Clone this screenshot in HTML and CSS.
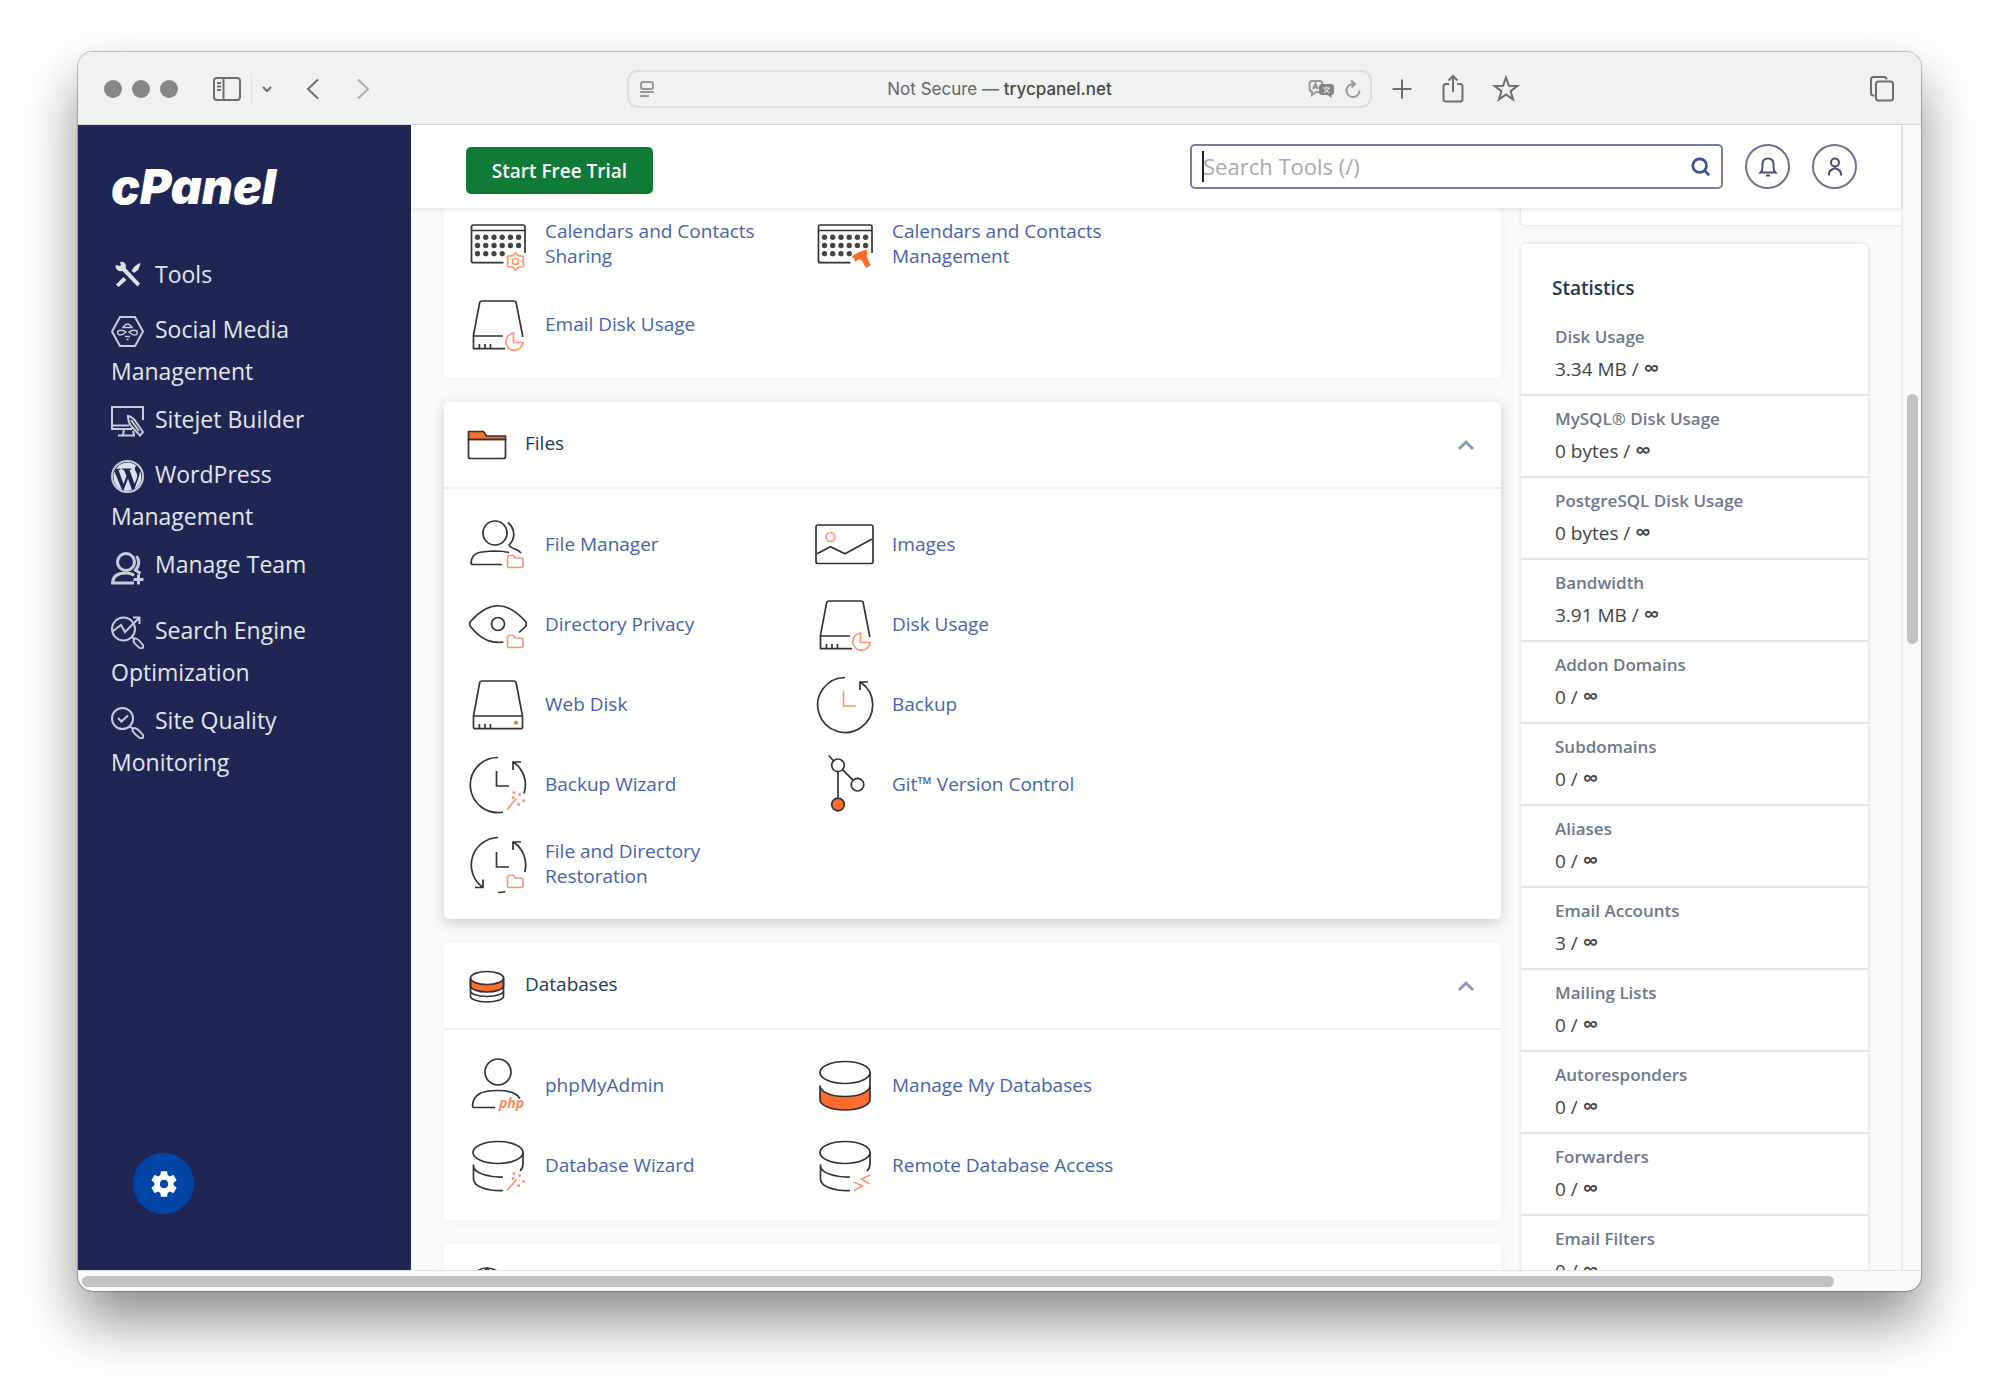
FILE: index.html
```html
<!DOCTYPE html>
<html lang="en">
<head>
    <meta charset="UTF-8">
    <meta name="viewport" content="width=device-width, initial-scale=1.0">
    <title>cPanel - Tools</title>
    <link rel="stylesheet" href="styles.css">
</head>
<body>
    <!-- icon sprite -->
    <svg class="sprite" aria-hidden="true">
        <symbol id="s-folder" viewBox="0 0 60 60">
            <path class="accent" d="M40.5 43q0-1.500 1.500-1.500h4.500l2 2.500h6q1.500 0 1.500 1.500v6.500q0 1.500-1.500 1.500h-12.500q-1.500 0-1.500-1.500z"/>
        </symbol>
        <symbol id="s-wand" viewBox="0 0 60 60">
            <path class="accent" d="M40 55.500l9.500-11"/>
            <path class="accent" stroke-linecap="round" stroke-width="3" d="M47 38.500h.1M52.500 40.500h.1M56.500 46.500h.1M46 43.500h.1M51.500 50.500h.1"/>
        </symbol>
        <symbol id="s-pie" viewBox="0 0 60 60">
            <path class="accent" d="M46.500 39a8.700 8.700 0 1 0 9.700 9.500h-8.700q-1 0-1-1z"/>
        </symbol>
        <symbol id="i-calendar" viewBox="0 0 60 60">
            <path d="M36.500 48.700H6.500q-2 0-2-2V13q0-2 2-2h49.500q2 0 2 2v26M4.500 16.500h53.500"/>
            <g class="dots">
                <circle cx="10.500" cy="23.300" r="2.700"/><circle cx="18.700" cy="23.300" r="2.700"/><circle cx="27" cy="23.300" r="2.700"/><circle cx="35.200" cy="23.300" r="2.700"/><circle cx="43.400" cy="23.300" r="2.700"/><circle cx="51.600" cy="23.300" r="2.700"/>
                <circle cx="10.500" cy="31.500" r="2.700"/><circle cx="18.700" cy="31.500" r="2.700"/><circle cx="27" cy="31.500" r="2.700"/><circle cx="35.200" cy="31.500" r="2.700"/><circle cx="43.400" cy="31.500" r="2.700"/><circle cx="51.600" cy="31.500" r="2.700"/>
                <circle cx="10.500" cy="39.700" r="2.700"/><circle cx="18.700" cy="39.700" r="2.700"/><circle cx="27" cy="39.700" r="2.700"/><circle cx="35.200" cy="39.700" r="2.700"/>
            </g>
        </symbol>
        <symbol id="i-cal-share" viewBox="0 0 60 60">
            <use href="#i-calendar"/>
            <path class="accent" d="M48.500 38.800l2.600 2.700 4.800.8q1 .5.800 1.500l-.8 3.600.8 3.600q.2 1-.8 1.500l-4.800.8-2.600 2.700-2.600-2.700-4.800-.8q-1-.5-.8-1.500l.8-3.600-.8-3.600q-.2-1 .8-1.500l4.800-.8z"/>
            <circle class="accent" cx="48.500" cy="47.500" r="3"/>
        </symbol>
        <symbol id="i-cal-manage" viewBox="0 0 60 60">
            <use href="#i-calendar"/>
            <path class="solid" d="M38 42l7-4 7.500-2.500 1.500 3-1.500 3.500 4 9.500-4.500 2.500-4.500-8-3.500-.500-2.500 2.500z"/>
        </symbol>
        <symbol id="i-disk-usage" viewBox="0 0 60 60">
            <path d="M55.500 43v-2L49.200 9q-.4-2-2.400-2H15q-2 0-2.400 2L6.500 41v13.700H38M6.500 42H36M12.400 50v4.700M18 50v4.700M23.500 50v4.700"/>
            <use href="#s-pie"/>
        </symbol>
        <symbol id="i-webdisk" viewBox="0 0 60 60">
            <path d="M6.500 42L12.600 9q.4-2 2.400-2h31.800q2 0 2.400 2l6.300 33v11q0 1.700-1.700 1.700H8.200q-1.700 0-1.700-1.700zH55.500M12.400 50v4.700M18 50v4.700M23.500 50v4.700"/>
            <circle class="dot-accent" cx="49" cy="48.700" r="2"/>
        </symbol>
        <symbol id="i-file-manager" viewBox="0 0 60 60">
            <circle cx="28" cy="19" r="12"/>
            <path d="M41 8.500c7 6 8 16 1 22.500q1 2.500 6 4 4 1.500 6 4M35 50.500H6q-2 0-2-2C5 38 13 37.500 28 37q8 0 14 1.500"/>
            <use href="#s-folder"/>
        </symbol>
        <symbol id="i-images" viewBox="0 0 60 60">
            <rect x="2" y="11" width="57" height="38.500" rx="2"/>
            <path d="M3 39.700l13.500-7L31 39.700 58 25"/>
            <circle class="accent" cx="16.500" cy="23" r="4.500"/>
        </symbol>
        <symbol id="i-privacy" viewBox="0 0 60 60">
            <path d="M36.500 48Q18 51 3.500 32.500q-1.800-2.500 0-5Q31-4 58.500 27.500q1.800 2.500 0 5L52 38.500"/>
            <circle cx="31" cy="30" r="6.500"/>
            <use href="#s-folder"/>
        </symbol>
        <symbol id="i-backup" viewBox="0 0 60 60">
            <path d="M31 3.500A27.500 27.500 0 1 0 47 8.500M54 8h-8v8"/>
            <path class="accent" d="M29.500 17v15H42"/>
        </symbol>
        <symbol id="i-backup-wizard" viewBox="0 0 60 60">
            <path d="M31 3.500A27.500 27.500 0 1 0 36 58M57 39.500A27.500 27.500 0 0 0 47 8.500M54 8h-8v8M29.500 17v15H42"/>
            <use href="#s-wand"/>
        </symbol>
        <symbol id="i-restore" viewBox="0 0 60 60">
            <path d="M31 3.500A27.500 27.500 0 0 0 16 53.500M8 53.500h8v-8M31 58.500q4 0 7.500-1M57.800 38A27.500 27.500 0 0 0 47 8.500M54 8h-8v8M29.500 18v15H42"/>
            <use href="#s-folder"/>
        </symbol>
        <symbol id="i-git" viewBox="0 0 60 60">
            <path d="M14.700 1.500l5 5.500M24 17.500v26M28.500 15.700l10.500 10.500"/>
            <circle cx="24" cy="11.300" r="6.300"/><circle cx="43.500" cy="30.700" r="6.300"/><circle class="filled" cx="24" cy="50.500" r="6.300"/>
        </symbol>
        <symbol id="i-php" viewBox="0 0 60 60">
            <circle cx="31" cy="17" r="13"/>
            <path d="M28 52.500H7q-1.500 0-1.500-1.500C6 39 15 35.500 31 35.500q17 0 22 8"/>
            <text class="php" x="32" y="53">php</text>
        </symbol>
        <symbol id="i-db" viewBox="0 0 60 60">
            <path class="filled" d="M6 30.500v14C6 50 16 55 31 55s25-5 25-10.500v-14C56 36.500 46 41.500 31 41.500S6 36.500 6 30.500z"/>
            <path d="M56 17.500v15"/>
            <ellipse cx="31" cy="17.500" rx="25" ry="11"/>
        </symbol>
        <symbol id="s-dbcut" viewBox="0 0 60 60">
            <ellipse cx="31" cy="17.500" rx="25" ry="11"/>
            <path d="M56 17.500V29q0 4-3 7M6.500 29.500V44c0 8 15 12 29.500 11.500M6.500 31c0 7 15 11.500 29.500 11"/>
        </symbol>
        <symbol id="i-db-wizard" viewBox="0 0 60 60"><use href="#s-dbcut"/><use href="#s-wand"/></symbol>
        <symbol id="i-db-remote" viewBox="0 0 60 60">
            <use href="#s-dbcut"/>
            <path class="accent" d="M39.500 47l9 4-9 4.500M56.500 40l-9 4 8 5"/>
        </symbol>
        <symbol id="chevron-up" viewBox="0 0 18 12"><path d="M2 10l7-7 7 7"/></symbol>
    </svg>

    <div class="window">
        <div class="toolbar">
            <div class="toolbar-side">
                <div class="lights"><span></span><span></span><span></span></div>
                <button class="tb-btn tb-sidebar" aria-label="Show sidebar">
                    <svg width="30" height="26" viewBox="0 0 30 26"><rect x="2" y="2" width="26" height="22" rx="3"/><path d="M11.500 2v22M5 7h4M5 10.500h4M5 14h4" /></svg>
                </button>
                <button class="tb-btn tb-more" aria-label="Tab groups">
                    <svg width="12" height="10" viewBox="0 0 12 10"><path d="M2 3l4 4 4-4"/></svg>
                </button>
                <button class="tb-btn tb-nav" aria-label="Back">
                    <svg width="18" height="24" viewBox="0 0 18 24"><path d="M14 2.500L4 12l10 9.500"/></svg>
                </button>
                <button class="tb-btn tb-nav dim" aria-label="Forward">
                    <svg width="18" height="24" viewBox="0 0 18 24"><path d="M4 2.500L14 12 4 21.500"/></svg>
                </button>
            </div>
            <div class="address">
                <svg width="16" height="18" viewBox="0 0 16 18"><rect x="2" y="2" width="12" height="7" rx="2"/><path d="M1 12h14M1 16h9"/></svg>
                <p>Not Secure — <b>trycpanel.net</b></p>
                <svg width="28" height="20" viewBox="0 0 28 20"><path d="M12 14l-1-1H8l-4 3v-3.500Q1.500 12 1.500 10V5q0-3 3-3h7q3 0 3 3M5 10l2.500-5.500L10 10M6 8.500h3"/><path class="fill" d="M14 5h9q3 0 3 3v5q0 3-2.500 3v3l-4-3H14q-3 0-3-3V8q0-3 3-3z"/><path class="cut" d="M15 9h7M18.500 7.500V9M16 13.500q4-1 5-4.500M16.500 10q1.500 3 5 3.500"/></svg>
                <svg width="18" height="20" viewBox="0 0 18 20"><path d="M9 5a6.500 6.500 0 1 0 6.500 6.500M7 1.500L11 5 7.500 8.500"/></svg>
            </div>
            <div class="toolbar-side">
                <button class="tb-btn tb-plus" aria-label="New tab"><svg width="22" height="22" viewBox="0 0 22 22"><path d="M11 1.500v19M1.500 11h19"/></svg></button>
                <button class="tb-btn tb-share" aria-label="Share"><svg width="24" height="30" viewBox="0 0 24 30"><path d="M8 10H5q-2.500 0-2.500 2.500V25q0 2.500 2.500 2.500h14q2.500 0 2.500-2.500V12.500Q21.500 10 19 10h-3M12 18V2M7.500 6.500L12 2l4.500 4.500"/></svg></button>
                <button class="tb-btn tb-star" aria-label="Bookmark"><svg width="28" height="28" viewBox="0 0 28 28"><path d="M14 2.500l2.900 8.300 8.600.1-6.900 5.200 2.500 8.400-7.100-5-7.100 5 2.500-8.400-6.900-5.200 8.600-.1z"/></svg></button>
                <button class="tb-btn tb-tabs" aria-label="Tab overview"><svg width="26" height="28" viewBox="0 0 26 28"><path d="M5.500 20.500H4.500Q2 20.500 2 18V4.500Q2 2 4.500 2H15q2.500 0 2.500 2.500"/><rect x="7" y="6.500" width="17" height="19" rx="2.500"/></svg></button>
            </div>
        </div>

        <div class="viewport">
            <nav class="sidebar">
                <a class="logo" href="#">cPanel</a>
                <ul>
                    <li class="single"><a href="#"><svg viewBox="0 0 33 33"><path class="f" d="M5 5l4 1 1-1-1-3q5-1 6 4l-.500 2L29 23.500 26.500 26.500 11.500 11Q6 12 4.500 7zM28.500 3l1 1-2.500 6-4 3-2.500-2.500 3-4zM12.500 17l3 3-8 7-2.500-2.500z"/></svg>Tools</a></li>
                    <li><a href="#"><svg viewBox="0 0 33 33"><path d="M9 2h15l8 14.500L24 31H9L1 16.500z"/><path class="thin" d="M12 12.500q4.500-7 9 0zM15 17q-4-3-8-1-1 4 2 4t6-3zM18 17q4-3 8-1 1 4-2 4t-6-3zM14 21.500h5M15.500 24.500h2"/></svg>Social Media Management</a></li>
                    <li class="single"><a href="#"><svg viewBox="0 0 33 33"><path d="M32 15V2H1v22h20M1 20.500h17M13 24l-1 6M22 26l1 4M7 30.500h17"/><path d="M17 11q5 1 8 6l7 10-3 3.500-8.500-9Q17 17 17 11zM20 15l8 11"/></svg>Sitejet Builder</a></li>
                    <li><a href="#"><svg viewBox="0 0 33 33"><circle cx="16.500" cy="16.500" r="15.500"/><path class="f" d="M3.500 11.500L11 30Q2.500 26 2.500 16.500q0-3 1-5zM5 9q4-6.500 11.500-6.500 5.500 0 9 3.500-2.500 1-1.500 4l2 4q.5 2.500-.5 5L23.500 24 18.500 10l2-.5v-1H11v1l2 .5 2.500 6-3 8L7.500 10l2-.5V8.500zM17 18.500l4 11.500q-4 1.500-8.500.3zM29 10.500q4.500 12.500-5.500 18.500l4.500-13q1-3 1-5.500z"/></svg>WordPress Management</a></li>
                    <li class="team"><a href="#"><svg viewBox="0 0 33 33"><g class="w"><circle cx="15" cy="10" r="8.500"/><path d="M25.500 4q5 7-1 14l5 3.500M23 31H1.500Q2 21 15 21q5 0 8 2.500M27.500 22.500v10M22.500 27.500h10"/></g></svg>Manage Team</a></li>
                    <li><a href="#"><svg viewBox="0 0 33 33"><circle cx="12.500" cy="13" r="11.500"/><path d="M1.500 15.500L10 9l4 7L28 2M22 1.500h6.500V8M21 21l2.500 2.500M24 22.500q2-1 8 6.500 1 3.500-2.500 3.500-6-4.500-7-7 0-2.500 1.500-3z"/></svg>Search Engine Optimization</a></li>
                    <li><a href="#"><svg viewBox="0 0 33 33"><circle cx="11.500" cy="12.500" r="10.500"/><path d="M7 12l3.500 3.500L17 9.500M19 20.500l3 2.500M23 22q3-.500 9 7 1 3.500-2.500 3.500-6-4.500-8-7.500 0-2.500 1.500-3z"/></svg>Site Quality Monitoring</a></li>
                </ul>
                <button class="fab" aria-label="Settings">
                    <svg width="32" height="32" viewBox="0 0 24 24"><path d="M19.140 12.940c.04-.3.060-.61.060-.94 0-.32-.020-.64-.070-.94l2.030-1.580a.49.49 0 0 0 .12-.61l-1.920-3.320a.49.49 0 0 0-.59-.22l-2.390.96a7 7 0 0 0-1.620-.94l-.36-2.540a.48.48 0 0 0-.48-.41h-3.840a.47.47 0 0 0-.47.41l-.36 2.540c-.59.240-1.130.570-1.620.940l-2.390-.96a.48.48 0 0 0-.59.220L2.740 8.870a.47.47 0 0 0 .12.610l2.030 1.580a6 6 0 0 0 0 1.880l-2.030 1.580a.49.49 0 0 0-.12.610l1.920 3.320c.12.220.370.290.590.220l2.390-.96c.5.380 1.030.700 1.620.940l.36 2.540c.05.240.240.410.480.410h3.840c.24 0 .44-.17.470-.41l.36-2.540a7 7 0 0 0 1.620-.94l2.390.96c.22.080.470 0 .59-.22l1.920-3.320a.47.47 0 0 0-.12-.61zM12 15.200a3.200 3.200 0 1 1 0-6.400 3.200 3.200 0 0 1 0 6.400z"/></svg>
                </button>
            </nav>

            <div class="page">
                <header class="topbar">
                    <button class="trial">Start Free Trial</button>
                    <div class="search">
                        <input id="search" type="text" placeholder="Search Tools (/)" aria-label="Search Tools">
                        <span class="caret"></span>
                        <button aria-label="Search"><svg width="20" height="20" viewBox="0 0 22 22"><circle cx="9.500" cy="9.500" r="7.500"/><path d="M15 15l5 5"/></svg></button>
                    </div>
                    <button class="round" aria-label="Notifications"><svg width="20" height="22" viewBox="0 0 20 22"><path d="M2.500 16.500h15q-2-2-2-5V8q0-5.500-5.500-5.500T4.500 8v3.500q0 3-2 5zM8 19.500h4"/></svg></button>
                    <button class="round" aria-label="User"><svg width="20" height="22" viewBox="0 0 20 22"><circle cx="10" cy="6.500" r="4"/><path d="M4 19.500V18q0-3 3-4.500l3-1.500 3 1.500q3 1.500 3 4.500v1.500"/></svg></button>
                </header>

                <div class="content">
                    <main>
                        <section class="card cut-top">
                            <div class="tools">
                                <a href="#"><svg><use href="#i-cal-share"/></svg><span>Calendars and Contacts Sharing</span></a>
                                <a href="#"><svg><use href="#i-cal-manage"/></svg><span>Calendars and Contacts Management</span></a>
                                <a href="#"><svg><use href="#i-disk-usage"/></svg><span>Email Disk Usage</span></a>
                            </div>
                        </section>

                        <section class="card active">
                            <div class="card-head">
                                <svg class="group-icon" viewBox="0 0 40 40"><path class="filled" d="M1.500 13V6.500h15l3 4.500h19v3.500h-37z"/><path d="M1.500 14.500v17q0 2 2 2h33q2 0 2-2v-17z"/></svg>
                                <h2>Files</h2>
                                <button class="toggle" aria-label="Collapse Files"><svg width="18" height="12"><use href="#chevron-up"/></svg></button>
                            </div>
                            <div class="tools">
                                <a href="#"><svg><use href="#i-file-manager"/></svg><span>File Manager</span></a>
                                <a href="#"><svg><use href="#i-images"/></svg><span>Images</span></a>
                                <a href="#"><svg><use href="#i-privacy"/></svg><span>Directory Privacy</span></a>
                                <a href="#"><svg><use href="#i-disk-usage"/></svg><span>Disk Usage</span></a>
                                <a href="#"><svg><use href="#i-webdisk"/></svg><span>Web Disk</span></a>
                                <a href="#"><svg><use href="#i-backup"/></svg><span>Backup</span></a>
                                <a href="#"><svg><use href="#i-backup-wizard"/></svg><span>Backup Wizard</span></a>
                                <a href="#"><svg><use href="#i-git"/></svg><span>Git™ Version Control</span></a>
                                <a href="#"><svg><use href="#i-restore"/></svg><span>File and Directory Restoration</span></a>
                            </div>
                        </section>

                        <section class="card">
                            <div class="card-head">
                                <svg class="group-icon" viewBox="0 0 40 40"><path class="filled" d="M3.500 13v7c0 3 7 6 16.500 6s16.500-3 16.500-6v-7z"/><ellipse class="white" cx="20" cy="12" rx="16.500" ry="6.500"/><path d="M3.500 12v18c0 3.500 7 6 16.500 6s16.500-2.500 16.500-6V12M3.500 24.500c0 3.500 7 6 16.500 6s16.500-2.500 16.500-6"/></svg>
                                <h2>Databases</h2>
                                <button class="toggle" aria-label="Collapse Databases"><svg width="18" height="12"><use href="#chevron-up"/></svg></button>
                            </div>
                            <div class="tools">
                                <a href="#"><svg><use href="#i-php"/></svg><span>phpMyAdmin</span></a>
                                <a href="#"><svg><use href="#i-db"/></svg><span>Manage My Databases</span></a>
                                <a href="#"><svg><use href="#i-db-wizard"/></svg><span>Database Wizard</span></a>
                                <a href="#"><svg><use href="#i-db-remote"/></svg><span>Remote Database Access</span></a>
                            </div>
                        </section>

                        <section class="card">
                            <div class="card-head">
                                <svg class="group-icon" viewBox="0 0 40 40"><circle cx="20" cy="19" r="18"/><path d="M2 19h36M20 1q-16 18 0 36 16-18 0-36z"/></svg>
                            </div>
                        </section>
                    </main>

                    <aside>
                        <div class="panel-end"></div>
                        <section class="stats">
                            <h2>Statistics</h2>
                            <dl>
                                <div><dt>Disk Usage</dt><dd>3.34 MB / <b>∞</b></dd></div>
                                <div><dt>MySQL® Disk Usage</dt><dd>0 bytes / <b>∞</b></dd></div>
                                <div><dt>PostgreSQL Disk Usage</dt><dd>0 bytes / <b>∞</b></dd></div>
                                <div><dt>Bandwidth</dt><dd>3.91 MB / <b>∞</b></dd></div>
                                <div><dt>Addon Domains</dt><dd>0 / <b>∞</b></dd></div>
                                <div><dt>Subdomains</dt><dd>0 / <b>∞</b></dd></div>
                                <div><dt>Aliases</dt><dd>0 / <b>∞</b></dd></div>
                                <div><dt>Email Accounts</dt><dd>3 / <b>∞</b></dd></div>
                                <div><dt>Mailing Lists</dt><dd>0 / <b>∞</b></dd></div>
                                <div><dt>Autoresponders</dt><dd>0 / <b>∞</b></dd></div>
                                <div><dt>Forwarders</dt><dd>0 / <b>∞</b></dd></div>
                                <div><dt>Email Filters</dt><dd>0 / <b>∞</b></dd></div>
                            </dl>
                        </section>
                    </aside>
                </div>
            </div>

            <div class="scroll-y"><span></span></div>
        </div>
        <div class="scroll-x"><span></span></div>
    </div>
</body>
</html>
```
FILE: styles.css
```css
:root {
    --navy: #202653;
    --link: #4763b0;
    --orange: #ff6c2c;
    --accent: #ff9470;
    --line: #333;
    --heading: #1f3a58;
    --page-bg: #fafafa;
    --thumb: #c2c2c2;
}

* {
    box-sizing: border-box;
}

body {
    display: flex;
    height: 100vh;
    margin: 0;
    padding: 52px 78px 103px;
    overflow: hidden;
    background: #fff;
    font-family: "Open Sans", sans-serif;
    font-size: 19px;
}

button {
    padding: 0;
    border: none;
    background: none;
    font-family: inherit;
    cursor: pointer;
}

a {
    text-decoration: none;
}

h2, p, ul, dl, dd {
    margin: 0;
    padding: 0;
}

svg {
    display: block;
    flex: none;
    fill: none;
    stroke: var(--line);
    stroke-width: 2;
}

.sprite {
    display: none;
}

.accent {
    stroke: var(--accent);
}

.solid, .dot-accent {
    fill: var(--orange);
    stroke: none;
}

.filled {
    fill: var(--orange);
}

.white {
    fill: #fff;
}

.dots {
    fill: #444;
    stroke: none;
}

.php {
    fill: #ff8a5c;
    stroke: none;
    font: italic 700 14px "Open Sans", sans-serif;
}

/* browser window */
.window {
    flex: 1;
    min-width: 0;
    display: flex;
    flex-direction: column;
    overflow: hidden;
    border-radius: 15px;
    background: var(--page-bg);
    box-shadow: 0 0 1px 1px rgba(0, 0, 0, 0.25), 0 30px 56px rgba(0, 0, 0, 0.45);
}

.toolbar {
    flex: none;
    display: flex;
    align-items: center;
    height: 73px;
    padding: 1px 26px 0;
    border-bottom: 1px solid #d6d8d7;
    background: #f0f1f1;
}

.toolbar-side {
    flex: 1;
    display: flex;
    align-items: center;
}

.toolbar svg {
    stroke: #6e6e6e;
}

.lights {
    display: flex;
    gap: 10px;
    margin-right: 34px;
}

.lights span {
    width: 18px;
    height: 18px;
    border-radius: 50%;
    background: #878787;
}

.tb-more {
    height: 30px;
    margin: 0 31px 0 9px;
    padding-left: 9px;
    border-left: 1px solid #e0e0e0;
}

.tb-nav {
    margin-right: 32px;
}

.dim {
    opacity: 0.5;
}

.address {
    flex: 0 1 745px;
    display: flex;
    align-items: center;
    height: 38px;
    padding: 0 8px 0 10px;
    border: 2px solid #dcdfde;
    border-radius: 11px;
    gap: 8px;
}

.address svg {
    stroke: #999;
}

.address .fill {
    fill: #858585;
    stroke: none;
}

.address .cut {
    stroke: #f0f1f1;
    stroke-width: 1;
}

.address p {
    flex: 1;
    padding-left: 36px;
    font: 17px Inter, sans-serif;
    text-align: center;
    color: #666;
}

.address b {
    font-weight: 500;
    color: #484848;
}

.tb-plus {
    margin-left: 19px;
}

.tb-share {
    margin: 0 27px 0 28px;
}

.tb-tabs {
    margin-left: auto;
}

.viewport {
    flex: 1;
    min-height: 0;
    display: flex;
}

/* sidebar */
.sidebar {
    flex: none;
    display: flex;
    flex-direction: column;
    width: 333px;
    padding: 30px 33px 56px;
    background: var(--navy);
}

.logo {
    margin-bottom: 34px;
    color: #fff;
    font-family: Inter, sans-serif;
    font-size: 48px;
    font-style: italic;
    font-weight: 900;
    line-height: 64px;
}

.sidebar ul {
    width: 220px;
    list-style: none;
}

.sidebar li {
    margin-bottom: 6px;
    font-size: 23px;
    font-weight: 500;
    line-height: 42px;
}

.sidebar .single {
    min-height: 49px;
}

.sidebar .team {
    min-height: 60px;
}

.sidebar li a {
    color: #e3e5ec;
}

.sidebar li svg {
    display: inline-block;
    width: 33px;
    height: 33px;
    margin: -6px 11px -6px 0;
    vertical-align: middle;
    stroke: #c9cbd9;
}

.sidebar .team svg {
    margin-top: 4px;
    vertical-align: text-top;
}

.sidebar .f {
    fill: #dfe1ea;
    stroke: none;
}

.sidebar .w {
    stroke-width: 3;
}

.sidebar .thin {
    stroke-width: 1.5;
}

.fab {
    display: flex;
    align-items: center;
    justify-content: center;
    width: 61px;
    height: 61px;
    margin: auto 0 0 22px;
    border-radius: 50%;
    background: #0045a5;
}

.fab svg {
    fill: #fff;
    stroke: none;
}

/* top bar */
.page {
    flex: 1;
    min-width: 0;
    display: flex;
    flex-direction: column;
}

.topbar {
    position: relative;
    z-index: 1;
    flex: none;
    display: flex;
    align-items: center;
    gap: 22px;
    height: 83px;
    padding: 0 44px 0 55px;
    background: #fff;
    box-shadow: 0 1px 5px rgba(0, 0, 0, 0.12);
}

.trial {
    width: 187px;
    height: 47px;
    margin: 8px auto 0 0;
    border-radius: 5px;
    background: #0f7b36;
    color: #fff;
    font-size: 19px;
    font-weight: 600;
}

.search {
    position: relative;
    flex: 0 1 533px;
    display: flex;
    align-items: center;
    height: 45px;
    padding: 0 10px 0 11px;
    border: 2px solid #767f9f;
    border-radius: 5px;
}

.search input {
    flex: 1;
    min-width: 0;
    padding: 0 0 2px;
    border: none;
    outline: none;
    background: none;
    color: #333;
    font-family: inherit;
    font-size: 22px;
}

.search input::placeholder {
    color: #aaa;
}

.search svg {
    stroke: #3c5394;
    stroke-width: 3;
}

.caret {
    position: absolute;
    top: 5px;
    left: 10px;
    width: 2px;
    height: 31px;
    background: #222;
}

.round {
    display: flex;
    align-items: center;
    justify-content: center;
    width: 45px;
    height: 45px;
    border: 2px solid #6a7295;
    border-radius: 50%;
}

.round svg {
    stroke: #47517a;
}

/* tool groups */
.content {
    flex: 1;
    min-height: 0;
    display: flex;
    gap: 20px;
    padding-left: 33px;
    overflow: hidden;
}

main {
    flex: 1;
    min-width: 0;
    display: flex;
    flex-direction: column;
    gap: 24px;
}

.card {
    flex: none;
    border-radius: 5px;
    background: #fff;
    box-shadow: 0 2px 14px rgba(0, 0, 0, 0.04);
}

.card.active {
    box-shadow: 0 4px 14px rgba(30, 50, 70, 0.22);
}

.card-head {
    display: flex;
    align-items: center;
    height: 87px;
    padding: 0 26px 0 23px;
    border-bottom: 2px solid #e9eef5;
}

.group-icon {
    width: 40px;
    height: 40px;
    margin-right: 18px;
    stroke-width: 1.7;
}

.card-head h2 {
    flex: 1;
    padding-bottom: 4px;
    color: var(--heading);
    font-size: 19px;
    font-weight: 500;
}

.toggle svg {
    stroke: #8d99ba;
    stroke-width: 3;
}

.tools {
    display: grid;
    grid-template-columns: repeat(2, 327px);
    gap: 20px;
    padding: 25px 22px 25px 23px;
}

.cut-top .tools {
    padding-top: 6px;
    padding-bottom: 24px;
}

.tools a {
    display: flex;
    align-items: center;
    height: 60px;
    gap: 18px;
    color: var(--link);
    line-height: 25px;
}

.tools svg {
    width: 60px;
    height: 60px;
    stroke-width: 1.7;
}

/* statistics */
aside {
    flex: none;
    width: 380px;
}

.panel-end {
    height: 17px;
    margin-bottom: 19px;
    border-radius: 0 0 0 5px;
    background: #fff;
    box-shadow: 0 0 4px rgba(0, 0, 0, 0.14);
}

.stats {
    margin-right: 33px;
    padding-top: 30px;
    border-radius: 5px;
    background: #fff;
    box-shadow: 0 0 4px rgba(0, 0, 0, 0.14);
}

.stats h2 {
    padding: 0 31px 12px;
    color: var(--heading);
    font-size: 19px;
    font-weight: 600;
    line-height: 28px;
}

.stats dl div {
    height: 82px;
    padding: 6px 34px 0;
    border-bottom: 2px solid #e6e6e6;
}

.stats dt {
    color: #6d788d;
    font-size: 17px;
    font-weight: 600;
    line-height: 33px;
}

.stats dd {
    color: #444;
    line-height: 33px;
}

.stats b {
    font-size: 22px;
    font-weight: 600;
    line-height: 22px;
}

/* scrollbars */
.scroll-y {
    flex: none;
    width: 20px;
    padding: 269px 3px 0 4px;
    border-left: 2px solid #ebebeb;
}

.scroll-y span {
    display: block;
    height: 250px;
    border-radius: 6px;
    background: var(--thumb);
}

.scroll-x {
    flex: none;
    height: 21px;
    padding: 5px 87px 0 4px;
    border-top: 1px solid #e4e4e4;
}

.scroll-x span {
    display: block;
    height: 11px;
    border-radius: 6px;
    background: var(--thumb);
}
```
